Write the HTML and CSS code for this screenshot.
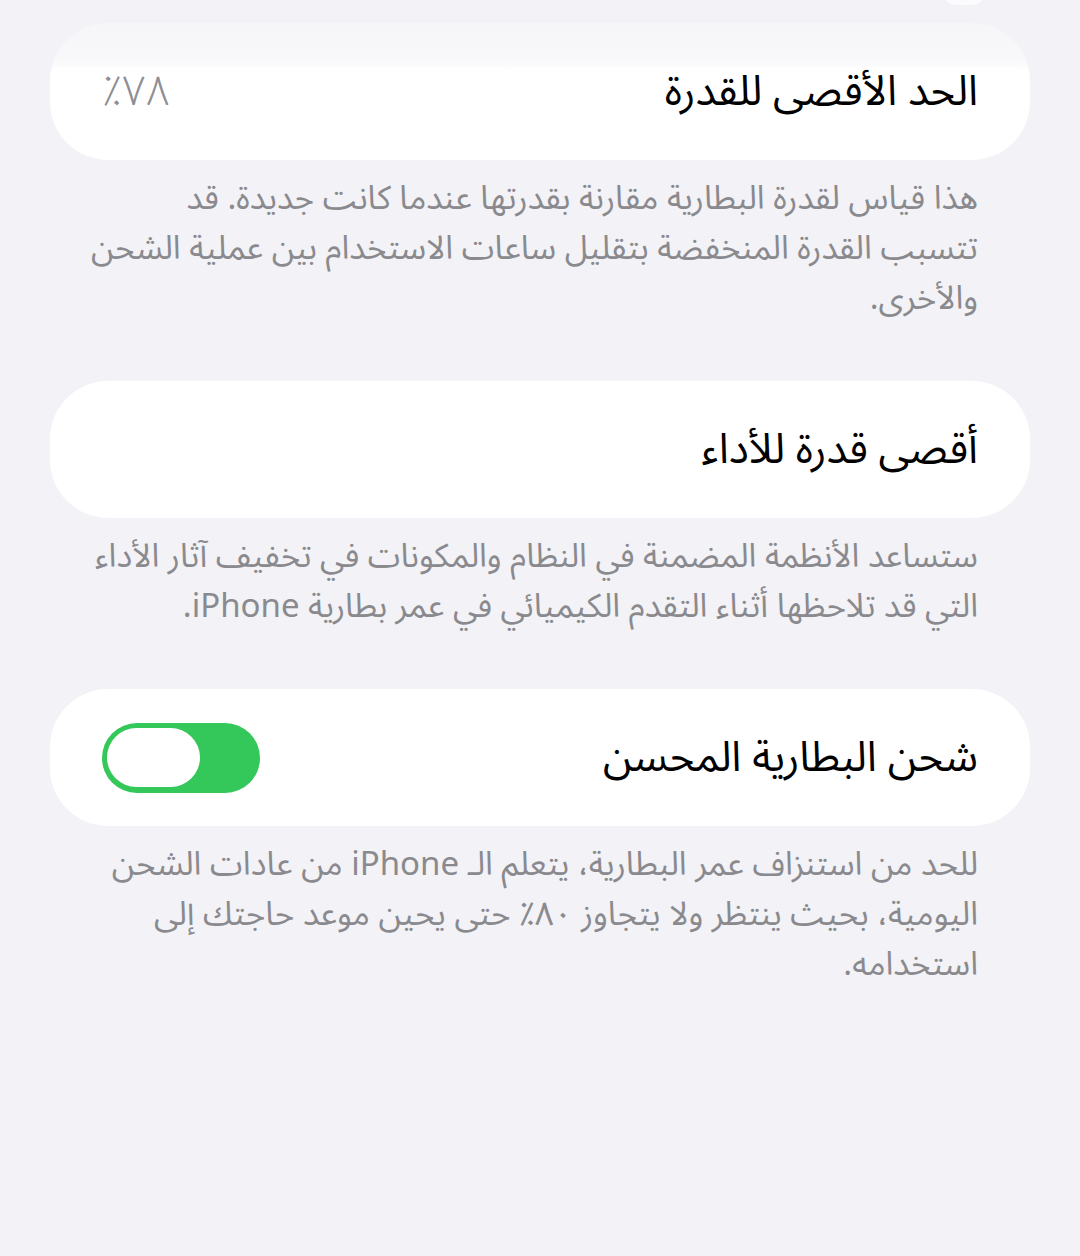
FILE: index.html
```html
<!DOCTYPE html>
<html lang="ar" dir="rtl">
<head>
    <meta charset="utf-8">
    <title>البطارية</title>
    <link rel="stylesheet" href="styles.css">
</head>
<body>
<div class="edge-tab"></div>

<div class="settings">
    <div class="cell cell-top">
        <span class="cell-title">الحد الأقصى للقدرة</span>
        <span class="cell-value">٧٨٪</span>
    </div>
    <p class="footnote">هذا قياس لقدرة البطارية مقارنة بقدرتها عندما كانت جديدة. قد تتسبب القدرة المنخفضة بتقليل ساعات الاستخدام بين عملية الشحن والأخرى.</p>

    <div class="cell">
        <span class="cell-title">أقصى قدرة للأداء</span>
    </div>
    <p class="footnote">ستساعد الأنظمة المضمنة في النظام والمكونات في تخفيف آثار الأداء التي قد تلاحظها أثناء التقدم الكيميائي في عمر بطارية iPhone.</p>

    <div class="cell">
        <span class="cell-title">شحن البطارية المحسن</span>
        <span class="switch is-on"><span class="switch-knob"></span></span>
    </div>
    <p class="footnote">للحد من استنزاف عمر البطارية، يتعلم الـ iPhone من عادات الشحن اليومية، بحيث ينتظر ولا يتجاوز ٨٠٪ حتى يحين موعد حاجتك إلى استخدامه.</p>
</div>
</body>
</html>
```

FILE: styles.css
```css
html, body {
    margin: 0;
    padding: 0;
}

body {
    background-color: #f2f2f7;
    font-family: "Noto Sans Arabic", "DejaVu Sans", sans-serif;
    width: 1080px;
    height: 1256px;
    overflow: hidden;
    position: relative;
}

/* bit of the control above, cut off by the top edge */
.edge-tab {
    position: absolute;
    top: -15px;
    right: 96px;
    width: 40px;
    height: 20px;
    border-radius: 10px;
    background: #fbfbfd;
}

.settings {
    padding: 23px 50px 0 50px;
}

.cell {
    height: 137px;
    background: #fff;
    border-radius: 58px;
    padding: 0 52px;
    display: flex;
    align-items: center;
    justify-content: space-between;
}

/* scroll edge haze over the first row */
.cell-top {
    background: linear-gradient(#f6f6f9 0, #f8f8fa 34px, #fbfbfc 42px, #fff 46px);
}

.cell-title {
    font-size: 42px;
    color: #000;
}

.cell-value {
    font-size: 42px;
    font-weight: 300;
    color: #8e8e93;
}

.footnote {
    margin: 14px 0 57px 0;
    padding: 0 52px 0 36px;
    font-size: 33px;
    line-height: 50px;
    color: #8a8a8e;
}

.switch {
    width: 158px;
    height: 70px;
    border-radius: 35px;
    background: #34c759;
    display: flex;
    align-items: center;
    justify-content: flex-end;
    padding: 0 5px;
    box-sizing: border-box;
}

.switch-knob {
    width: 93px;
    height: 59px;
    border-radius: 30px;
    background: #fff;
}
```
